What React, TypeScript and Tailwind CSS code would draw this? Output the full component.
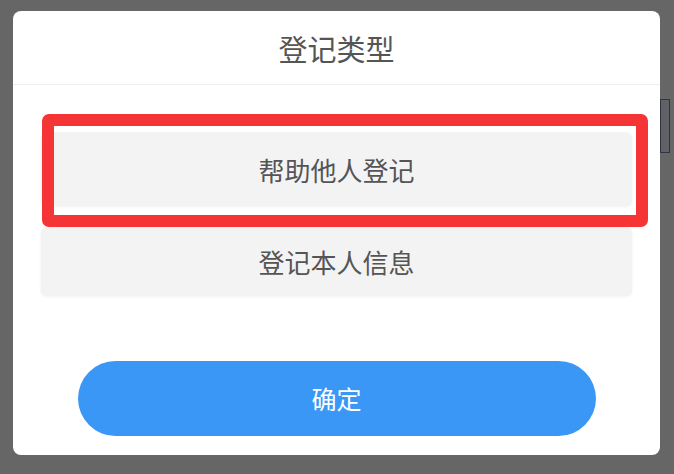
import React from "react";

export default function App() {
  const cjk = { fontFamily: '"Noto Sans CJK SC", "Noto Sans", sans-serif' };
  return (
    <div className="relative w-[674px] h-[474px] bg-[#666666] pt-[11px] pl-[13px] overflow-hidden" style={cjk}>
      <div className="absolute left-[660px] top-[99px] w-[10px] h-[54px] border border-[#2f3540] bg-[#5f6166]" />
      <div className="relative w-[647px] h-[444px] rounded-[8px] bg-white flex flex-col">
        <div className="h-[74px] flex items-center justify-center text-[29px] text-[#555555] border-b border-[#eeeeee] pt-[2px]">
          登记类型
        </div>
        <div className="flex flex-col gap-[21px] px-[28px] pt-[47px]">
          <div className="h-[74px] rounded-[6px] bg-[#f3f3f3] shadow-[0_1px_3px_rgba(0,0,0,0.06)] flex items-center justify-center text-[26px] text-[#555555]">
            帮助他人登记
          </div>
          <div className="h-[69px] rounded-[6px] bg-[#f3f3f3] shadow-[0_1px_3px_rgba(0,0,0,0.06)] flex items-center justify-center text-[26px] text-[#555555]">
            登记本人信息
          </div>
        </div>
        <div className="flex justify-center pt-[65px]">
          <div className="w-[518px] h-[75px] rounded-full bg-[#3a97f5] flex items-center justify-center text-[25px] text-white">
            确定
          </div>
        </div>
        <div className="absolute left-[29px] top-[103px] w-[606px] h-[113px] border-[12px] border-[#f53535] rounded-[7px]" />
      </div>
    </div>
  );
}
